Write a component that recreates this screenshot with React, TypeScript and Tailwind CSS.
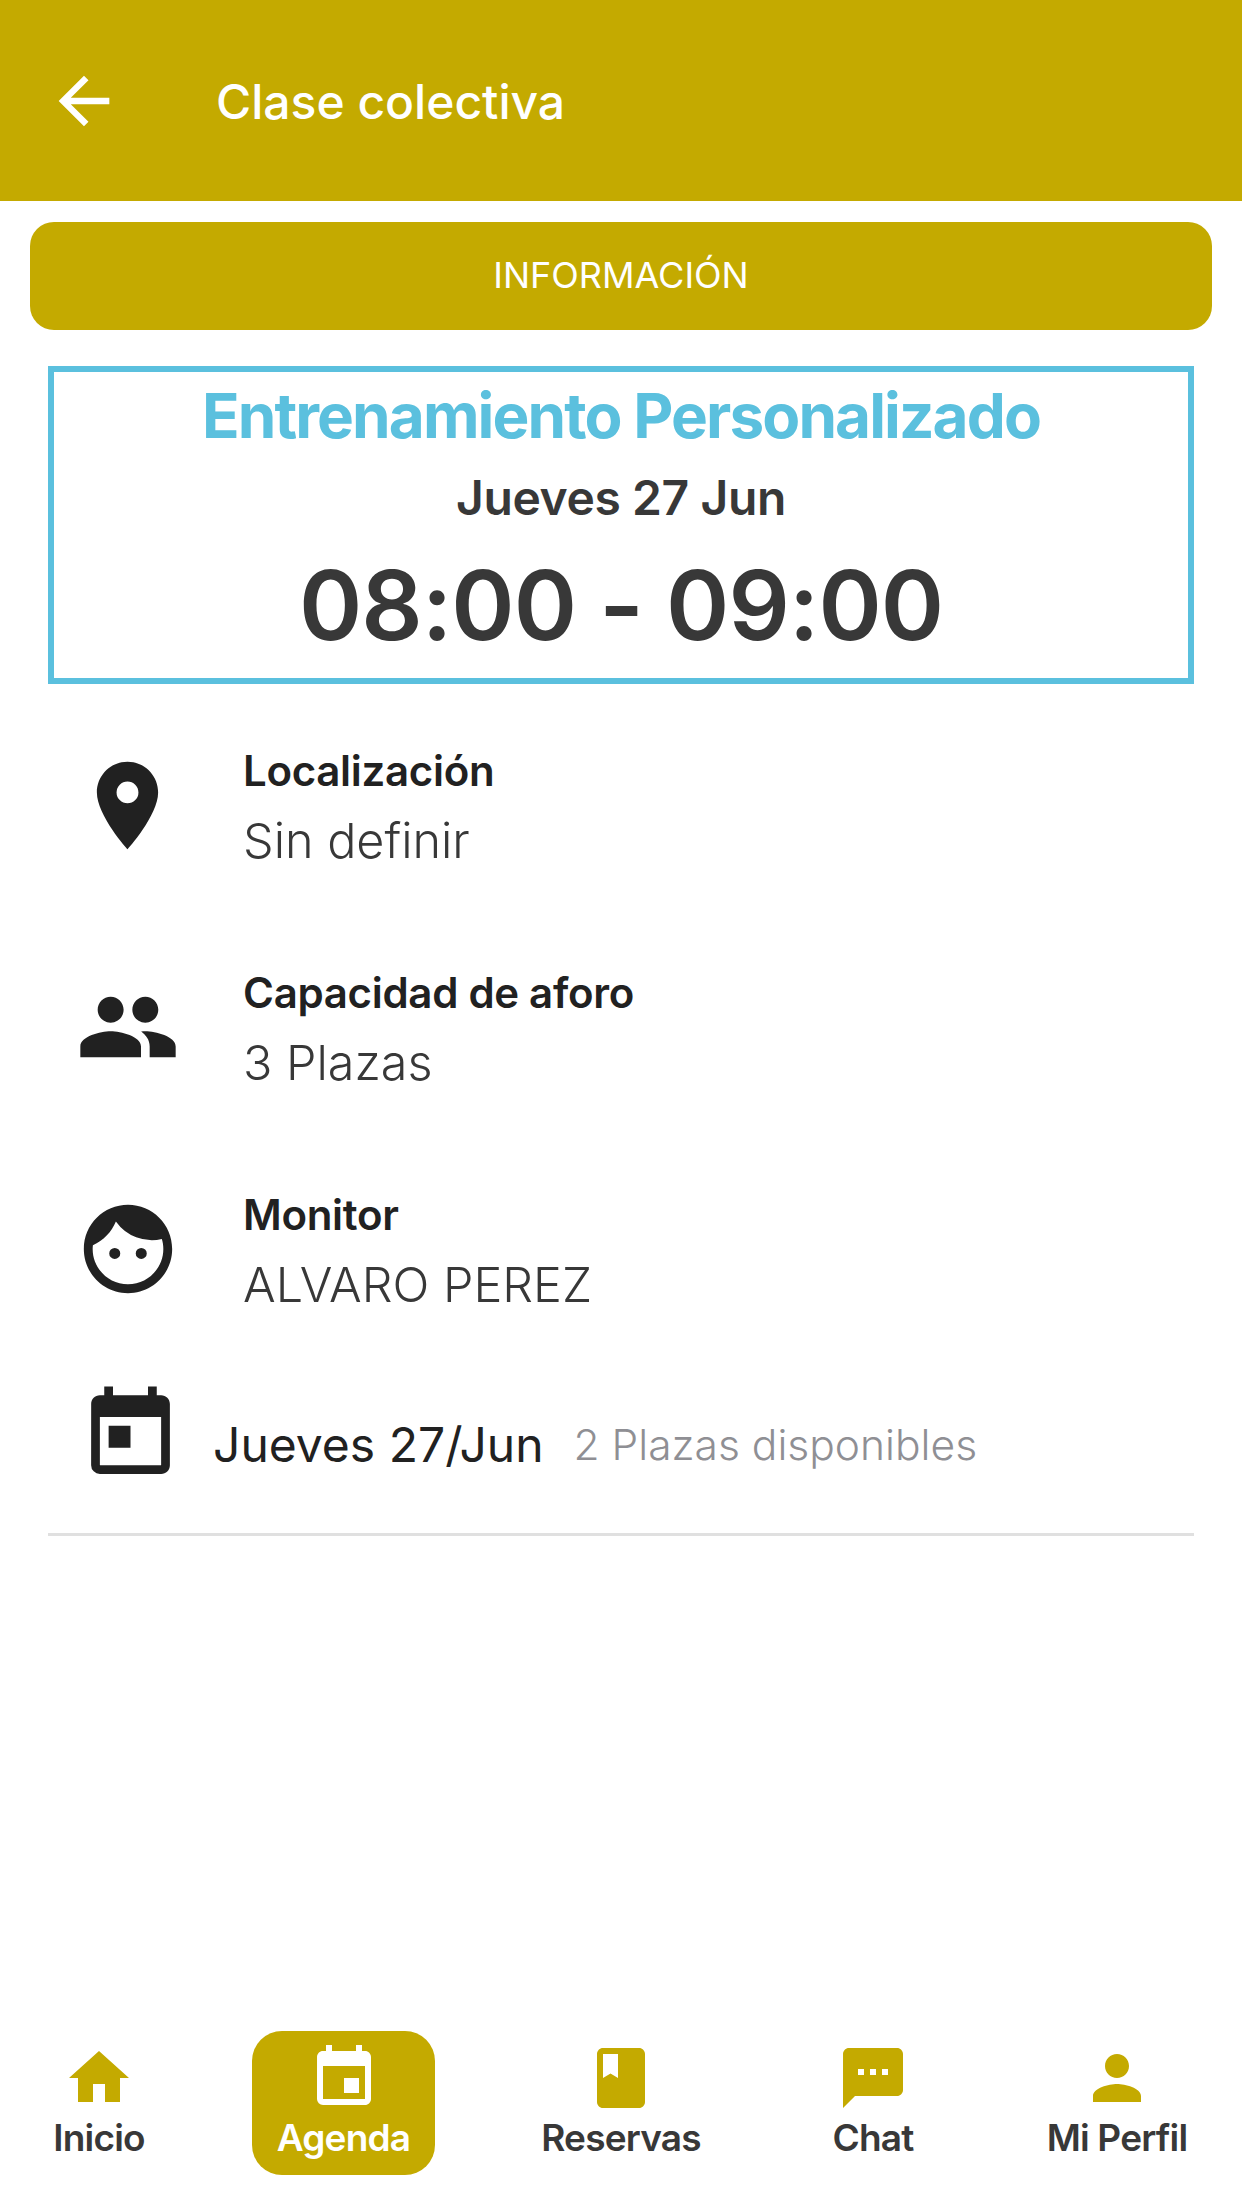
import { MdArrowBack, MdBook, MdEvent, MdFace, MdHome, MdPeople, MdPerson, MdPlace, MdSms, MdToday } from "react-icons/md"

const details = [
  { icon: MdPlace, size: "text-[105px]", title: "Localización", value: "Sin definir" },
  { icon: MdPeople, size: "text-[104px]", title: "Capacidad de aforo", value: "3 Plazas" },
  { icon: MdFace, size: "text-[106px]", title: "Monitor", value: "ALVARO PEREZ" },
]

const tabs = [
  { icon: MdHome, label: "Inicio", box: "w-[198px]" },
  { icon: MdEvent, label: "Agenda", box: "ml-[54px] w-[183px]", active: true },
  { icon: MdBook, label: "Reservas", box: "ml-[86px] w-[200px]" },
  { icon: MdSms, label: "Chat", box: "ml-[52px] w-[200px]" },
  { icon: MdPerson, label: "Mi Perfil", box: "ml-[44px] w-[200px]" },
]

export default function App() {
  return (
    <div className="flex h-[2208px] w-[1242px] flex-col overflow-hidden bg-white font-['Inter',sans-serif]">
      <header className="flex h-[201px] shrink-0 items-center bg-[#c4aa00] text-white">
        <MdArrowBack className="ml-[46px] text-[76px]" />
        <h1 className="mt-[2px] ml-[94px] text-[48px] font-medium">Clase colectiva</h1>
      </header>

      <div className="mx-[30px] mt-[21px] flex h-[108px] items-center justify-center rounded-[24px] bg-[#c4aa00] pb-[2px] text-[36px] text-white">
        INFORMACIÓN
      </div>

      <section className="mx-[48px] mt-[36px] flex h-[318px] flex-col items-center border-[6px] border-[#5bc0de]">
        <h2 className="mt-[2px] text-[62px] leading-[84px] font-bold tracking-[-1.9px] text-[#5bc0de]">Entrenamiento Personalizado</h2>
        <p className="mt-[10px] text-[48px] leading-[60px] font-semibold tracking-[-0.4px] text-[#383838]">Jueves 27 Jun</p>
        <p className="mt-[17px] text-[96px] leading-[120px] font-semibold tracking-[-1px] text-[#383838]">08:00 - 09:00</p>
      </section>

      <div className="mt-[56px] flex flex-col gap-[82px]">
        {details.map((item) => (
          <div key={item.title} className="flex h-[140px] items-center">
            <div className="mb-[10px] flex w-[243px] shrink-0 justify-center pl-[12px]">
              <item.icon className={`${item.size} text-[#212121]`} />
            </div>
            <div className="flex flex-col">
              <span className="text-[42px] leading-[62px] font-semibold tracking-[-0.3px] text-[#212121]">{item.title}</span>
              <span className="text-[48.5px] leading-[78px] font-light text-[#383838]">{item.value}</span>
            </div>
          </div>
        ))}
      </div>

      <div className="mx-[48px] mt-[77px] flex h-[135px] items-center border-b-[3px] border-[#e0e0e0] pb-[44px]">
        <MdToday className="mb-[21px] ml-[30px] text-[105px] text-[#212121]" />
        <span className="ml-[30px] text-[48px] leading-[60px] text-[#212121]">Jueves 27/Jun</span>
        <span className="ml-[30px] text-[42.5px] leading-[60px] font-light text-[#8f8f94]">2 Plazas disponibles</span>
      </div>

      <nav className="mt-auto mb-[32px] flex h-[146px] items-center">
        {tabs.map((tab) => (
          <div
            key={tab.label}
            className={`flex h-[144px] shrink-0 flex-col items-center justify-center rounded-[30px] ${tab.box} ${tab.active ? "bg-[#c4aa00] text-white" : "text-[#383838]"}`}
          >
            <tab.icon className={`-mt-[4px] mb-[2px] text-[72px] ${tab.active ? "text-white" : "text-[#c4aa00]"}`} />
            <span className="text-[37px] leading-[44px] font-semibold tracking-[-0.8px]">{tab.label}</span>
          </div>
        ))}
      </nav>
    </div>
  )
}
